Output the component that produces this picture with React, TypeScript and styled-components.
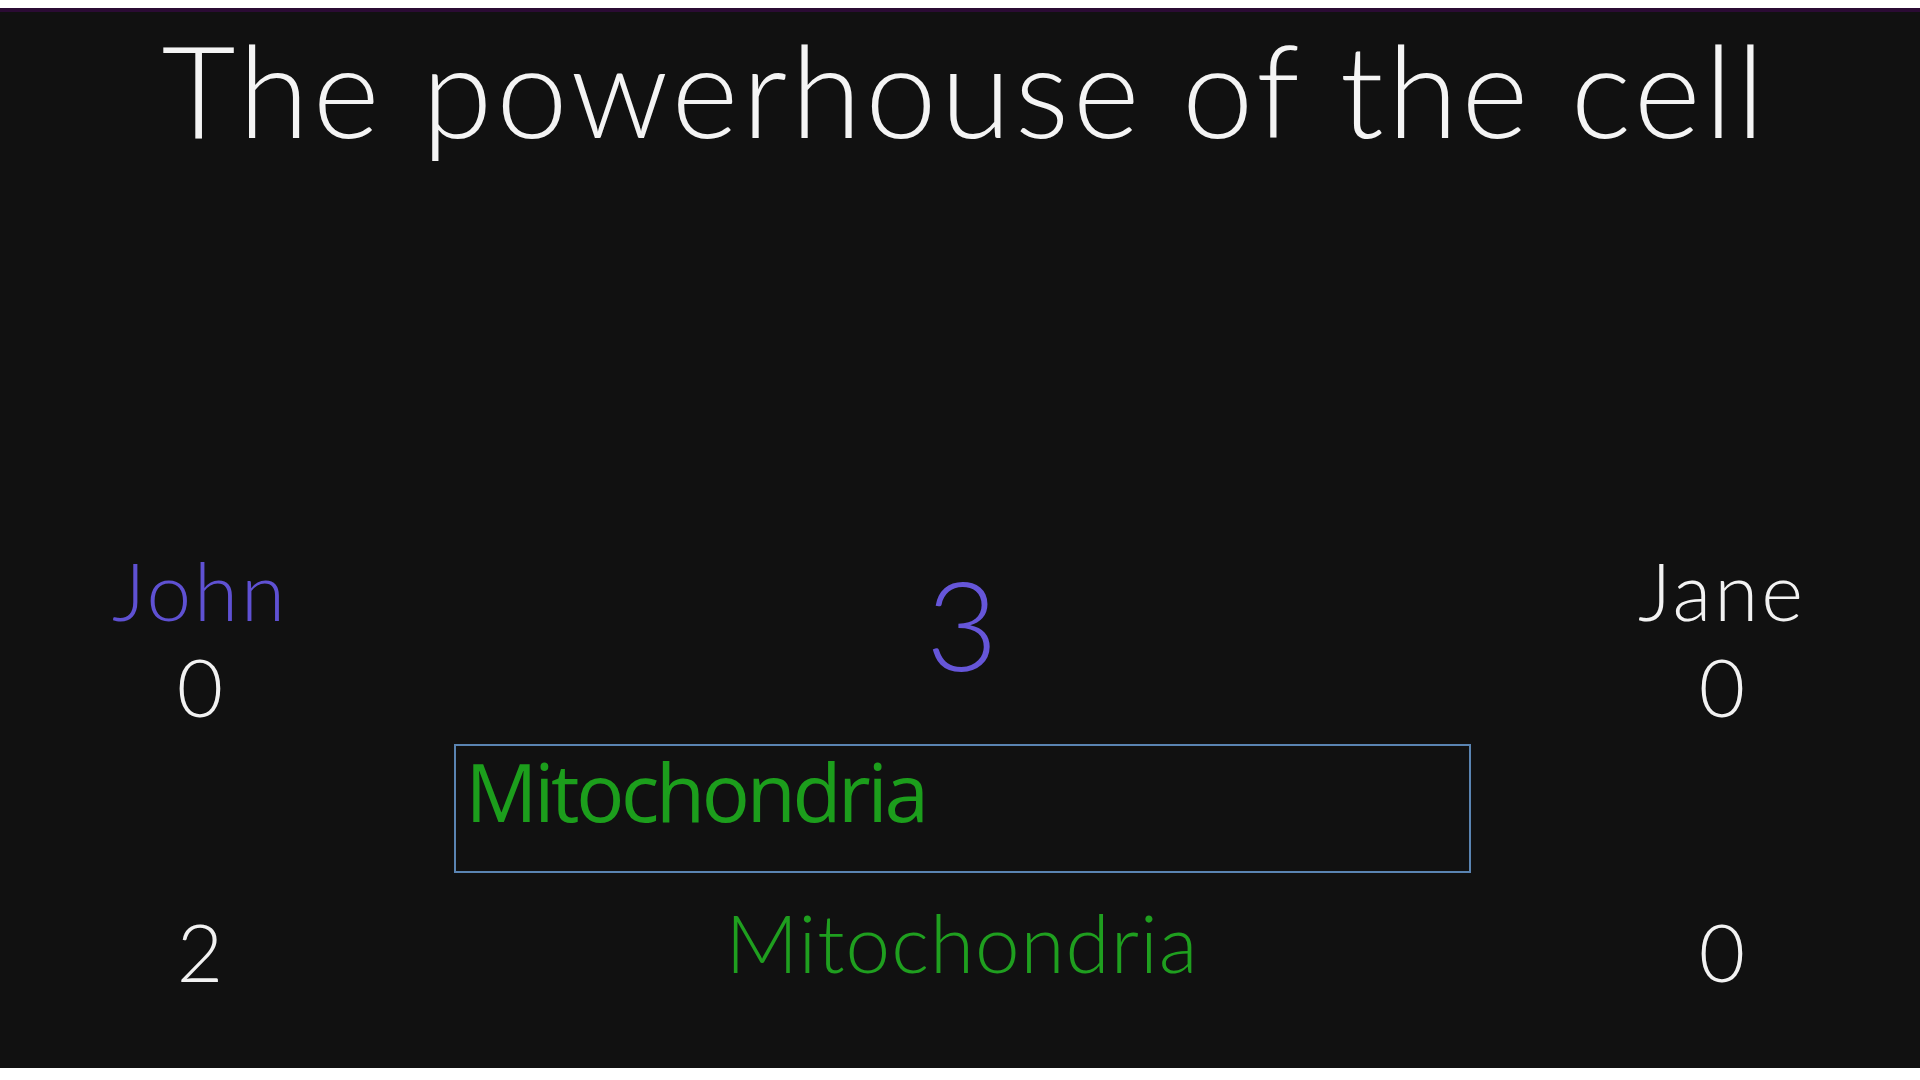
import React from "react";
import styled, { createGlobalStyle } from "styled-components";

const GlobalStyle = createGlobalStyle`
  html, body {
    margin: 0;
    padding: 0;
    background: #ffffff;
  }
  * {
    box-sizing: border-box;
  }
`;

const Stage = styled.main`
  margin-top: 8px;
  height: 1060px;
  background: #111111;
  border-top: 4px solid #2b0b34;
  display: flex;
  flex-direction: column;
  font-family: "Lato", "Noto Sans", sans-serif;
  font-weight: 300;
  color: #f2f2f2;
  overflow: hidden;
`;

const Question = styled.h1`
  margin: 0;
  padding-left: 10px;
  font-size: 128px;
  font-weight: 300;
  line-height: 154px;
  letter-spacing: 3.8px;
  text-align: center;
  color: #f4f4f4;
`;

const Board = styled.section`
  margin-top: 376px;
  display: grid;
  grid-template-columns: 400px 1fr 396px;
  grid-template-rows: 96px 92px auto auto;
  text-align: center;
`;

const PlayerName = styled.div<{ $active?: boolean; $col: number }>`
  grid-column: ${(p) => p.$col};
  grid-row: 1;
  font-size: 80px;
  line-height: 96px;
  letter-spacing: 3px;
  color: ${(p) => (p.$active ? "#5f51d3" : "#f2f2f2")};
`;

const Score = styled.div<{ $col: number; $row: number; $lh: number }>`
  grid-column: ${(p) => p.$col};
  grid-row: ${(p) => p.$row};
  font-size: 80px;
  line-height: ${(p) => p.$lh}px;
  color: #f2f2f2;
`;

const Timer = styled.div`
  grid-column: 2;
  grid-row: 1 / span 2;
  align-self: start;
  font-size: 124px;
  line-height: 162px;
  color: #6656d9;
`;

const AnswerInput = styled.input`
  grid-column: 2;
  grid-row: 3;
  justify-self: center;
  width: 1017px;
  height: 129px;
  margin: 14px 0 28px;
  padding: 0 10px 37px;
  border: 2px solid #5a84b2;
  border-radius: 0;
  outline: none;
  background: #111111;
  color: #1c9e1c;
  font-family: "Open Sans", "Noto Sans", sans-serif;
  font-weight: 400;
  font-size: 80px;
  line-height: 88px;
  letter-spacing: -3.3px;
`;

const RevealedAnswer = styled.div`
  grid-column: 2;
  grid-row: 4;
  align-self: start;
  font-size: 80px;
  line-height: 82px;
  letter-spacing: 1px;
  color: #1f9f1f;
`;

export default function App() {
  return (
    <>
      <GlobalStyle />
      <Stage>
        <Question>The powerhouse of the cell</Question>
        <Board>
          <PlayerName $col={1} $active>
            John
          </PlayerName>
          <Timer>3</Timer>
          <PlayerName $col={3}>Jane</PlayerName>
          <Score $col={1} $row={2} $lh={96}>
            0
          </Score>
          <Score $col={3} $row={2} $lh={96}>
            0
          </Score>
          <AnswerInput type="text" defaultValue="Mitochondria" readOnly />
          <Score $col={1} $row={4} $lh={100}>
            2
          </Score>
          <RevealedAnswer>Mitochondria</RevealedAnswer>
          <Score $col={3} $row={4} $lh={100}>
            0
          </Score>
        </Board>
      </Stage>
    </>
  );
}
